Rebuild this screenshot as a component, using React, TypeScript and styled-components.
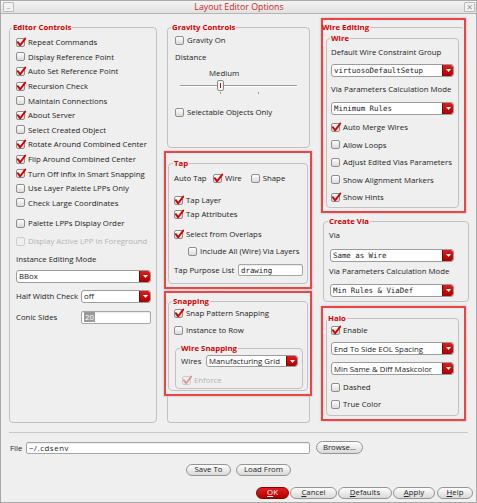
import React from "react";
import styled, { createGlobalStyle, css } from "styled-components";

const SANS = `"Open Sans", "DejaVu Sans", sans-serif`;
const MONO = `"DejaVu Sans Mono", "Liberation Mono", monospace`;

const GlobalStyle = createGlobalStyle`
  html, body { margin: 0; padding: 0; background: #efefef; }
  * { box-sizing: border-box; }
`;

const Window = styled.div`
  width: 477px;
  height: 503px;
  border: 1px solid #a9a9a9;
  background: #efefef;
  display: flex;
  flex-direction: column;
  font-family: ${SANS};
  font-size: 7.8px;
  color: #222;
  overflow: hidden;
`;

const TitleBar = styled.div`
  height: 13px;
  flex: none;
  display: flex;
  align-items: center;
  justify-content: space-between;
  padding: 0 1px 0 2px;
  background: linear-gradient(#f4f4f4, #e1e1e1);
  border-bottom: 1px solid #b4b4b4;
`;

const TitleButton = styled.span`
  width: 11px;
  height: 10px;
  border: 1px solid #b9b9b9;
  border-radius: 1px;
  background: #f3f3f3;
  display: flex;
  align-items: center;
  justify-content: center;
  color: #9a9a9a;
  font-size: 8px;
  line-height: 1;
`;

const Title = styled.span`
  color: #d01c1c;
  font-size: 8.8px;
  line-height: 12px;
`;

const Body = styled.div`
  flex: none;
  height: 409px;
  display: flex;
  padding: 4px 7px 0 8px;
`;

const Column = styled.div<{ $ml?: number }>`
  width: 148px;
  flex: none;
  display: flex;
  flex-direction: column;
  margin-left: ${(p) => p.$ml ?? 0}px;
`;

const Group = styled.fieldset<{ $m?: string; $h?: number; $grow?: boolean; $topOnly?: boolean; $open?: boolean }>`
  margin: ${(p) => p.$m ?? "0"};
  padding: 0;
  min-width: 0;
  border: 1px solid #c2c2c2;
  border-radius: 4px;
  ${(p) => (p.$h ? `height: ${p.$h}px; flex: none;` : "")}
  ${(p) => (p.$grow ? "flex: 1;" : "")}
  ${(p) =>
    p.$topOnly &&
    css`
      border-left-color: transparent;
      border-right-color: transparent;
      border-bottom-color: transparent;
    `}
  ${(p) =>
    p.$open &&
    css`
      border-top: none;
      border-top-left-radius: 0;
      border-top-right-radius: 0;
    `}
`;

const Legend = styled.legend<{ $ml?: number }>`
  color: #d40000;
  font-weight: 700;
  font-size: 7.8px;
  line-height: 10px;
  padding: 0 1px;
  margin-left: ${(p) => p.$ml ?? 3}px;
`;

const Content = styled.div<{ $p: string }>`
  display: flex;
  flex-direction: column;
  padding: ${(p) => p.$p};
`;

const RedBox = styled.div<{ $m?: string; $h: number; $p: string }>`
  flex: none;
  height: ${(p) => p.$h}px;
  margin: ${(p) => p.$m ?? "0"};
  padding: ${(p) => p.$p};
  border: 2px solid #f04444;
  box-shadow: 0 0 2px rgba(0, 0, 0, 0.25);
  display: flex;
  flex-direction: column;
`;

const Row = styled.div<{ $h?: number; $mt?: number; $pl?: number; $between?: boolean }>`
  display: flex;
  align-items: center;
  flex: none;
  height: ${(p) => p.$h ?? 14}px;
  margin-top: ${(p) => p.$mt ?? 0}px;
  padding-left: ${(p) => p.$pl ?? 0}px;
  white-space: nowrap;
  ${(p) => p.$between && "justify-content: space-between;"}
`;

const Label = styled.span<{ $w?: number; $disabled?: boolean }>`
  ${(p) => (p.$w ? `width: ${p.$w}px; flex: none;` : "")}
  color: ${(p) => (p.$disabled ? "#b3b3b3" : "#222")};
`;

const CheckLabel = styled.span<{ $disabled?: boolean; $ml?: number }>`
  display: inline-flex;
  align-items: center;
  gap: 3px;
  margin-left: ${(p) => p.$ml ?? 0}px;
  color: ${(p) => (p.$disabled ? "#b3b3b3" : "#222")};
`;

const Box = styled.span<{ $disabled?: boolean }>`
  position: relative;
  width: 9px;
  height: 9px;
  flex: none;
  border: 1px solid ${(p) => (p.$disabled ? "#cdcdcd" : "#8e8e8e")};
  border-radius: 2px;
  background: ${(p) => (p.$disabled ? "#efefef" : "linear-gradient(#fefefe, #dadada)")};
`;

const Mark = styled.svg`
  position: absolute;
  left: -1px;
  top: -2px;
  overflow: visible;
`;

const Check: React.FC<{ on?: boolean; disabled?: boolean; ml?: number; children: React.ReactNode }> = ({
  on,
  disabled,
  ml,
  children,
}) => (
  <CheckLabel $disabled={disabled} $ml={ml}>
    <Box $disabled={disabled}>
      {on && (
        <Mark width="10" height="10" viewBox="0 0 10 10">
          <path
            d="M1.8 5.2 L4.2 8.3 L9.2 1.6"
            fill="none"
            stroke={disabled ? "#dc9a9a" : "#d40000"}
            strokeWidth="1.9"
            strokeLinecap="round"
            strokeLinejoin="round"
          />
        </Mark>
      )}
    </Box>
    {children}
  </CheckLabel>
);

const SelectBox = styled.div<{ $w?: number; $h?: number; $mt?: number; $ml?: number }>`
  flex: none;
  display: flex;
  align-items: stretch;
  width: ${(p) => (p.$w ? `${p.$w}px` : "auto")};
  height: ${(p) => p.$h ?? 13}px;
  margin-top: ${(p) => p.$mt ?? 0}px;
  margin-left: ${(p) => p.$ml ?? 0}px;
  border: 1px solid #9c9c9c;
  border-radius: 3px;
  background: #fff;
  overflow: hidden;
`;

const SelectText = styled.span<{ $mono?: boolean }>`
  flex: 1;
  display: flex;
  align-items: center;
  padding-left: 2px;
  overflow: hidden;
  white-space: nowrap;
  font-family: ${(p) => (p.$mono ? MONO : SANS)};
  font-size: ${(p) => (p.$mono ? "7.4px" : "7.8px")};
  color: #1a1a1a;
`;

const SelectButton = styled.span`
  width: 11px;
  flex: none;
  display: flex;
  align-items: center;
  justify-content: center;
  background: linear-gradient(#dc1e1e, #a80000);
  border-left: 1px solid #8c0000;
  border-radius: 0 2px 2px 0;
`;

const Select: React.FC<{ text: string; mono?: boolean; w?: number; h?: number; mt?: number; ml?: number }> = ({
  text,
  mono,
  w,
  h,
  mt,
  ml,
}) => (
  <SelectBox $w={w} $h={h} $mt={mt} $ml={ml}>
    <SelectText $mono={mono}>{text}</SelectText>
    <SelectButton>
      <svg width="5" height="3" viewBox="0 0 5 3">
        <path d="M0 0 H5 L2.5 3 Z" fill="#fff" />
      </svg>
    </SelectButton>
  </SelectBox>
);

const TextInput = styled.div<{ $w: number; $h?: number; $mono?: boolean; $spaced?: boolean }>`
  flex: none;
  width: ${(p) => p.$w}px;
  height: ${(p) => p.$h ?? 12}px;
  border: 1px solid #a6a6a6;
  border-radius: 2px;
  background: #fff;
  box-shadow: inset 0 1px 1px rgba(0, 0, 0, 0.08);
  display: flex;
  align-items: center;
  padding-left: 2px;
  font-family: ${(p) => (p.$mono ? MONO : SANS)};
  font-size: ${(p) => (p.$mono ? "7.4px" : "7.8px")};
  letter-spacing: ${(p) => (p.$spaced ? "0.6px" : "0")};
  color: #1a1a1a;
  white-space: nowrap;
`;

const Selected = styled.span`
  background: #9a9a9a;
  color: #fff;
  padding: 0 1px;
`;

const SliderLabel = styled.div`
  height: 12px;
  display: flex;
  align-items: center;
  padding-left: 34px;
  margin-top: 3px;
`;

const SliderArt = styled.svg`
  display: block;
  flex: none;
`;

const Separator = styled.div`
  flex: none;
  height: 1px;
  margin: 9px 8px 0 8px;
  background: #c9c9c9;
`;

const FileRow = styled.div`
  flex: none;
  height: 13px;
  margin-top: 8px;
  display: flex;
  align-items: center;
  padding-left: 9px;
`;

const CenterRow = styled.div`
  flex: none;
  height: 12px;
  margin-top: 10px;
  display: flex;
  justify-content: center;
  gap: 5px;
`;

const ButtonRow = styled.div`
  flex: none;
  height: 12px;
  margin-top: 11px;
  display: flex;
  justify-content: flex-end;
  gap: 1px;
  padding-right: 3px;
`;

const Pill = styled.button<{ $w: number; $h?: number; $primary?: boolean; $ml?: number }>`
  width: ${(p) => p.$w}px;
  height: ${(p) => p.$h ?? 12}px;
  margin-left: ${(p) => p.$ml ?? 0}px;
  padding: 0;
  border: 1px solid ${(p) => (p.$primary ? "#8a0000" : "#959595")};
  border-radius: 7px;
  background: ${(p) => (p.$primary ? "linear-gradient(#e41c1c, #b00000)" : "linear-gradient(#fdfdfd, #d9d9d9)")};
  color: ${(p) => (p.$primary ? "#fff" : "#222")};
  font-family: ${SANS};
  font-size: 7.8px;
  line-height: 1;
  display: flex;
  align-items: center;
  justify-content: center;
  white-space: nowrap;
`;

const U = styled.span`
  text-decoration: underline;
`;

export default function App() {
  return (
    <>
      <GlobalStyle />
      <Window>
        <TitleBar>
          <TitleButton>–</TitleButton>
          <Title>Layout Editor Options</Title>
          <TitleButton>✕</TitleButton>
        </TitleBar>

        <Body>
          {/* Left column */}
          <Column>
            <Group $m="4px 0 0 0" $h={401}>
              <Legend $ml={2}>Editor Controls</Legend>
              <Content $p="3px 5px 0 6px">
                <Row $h={14.6}><Check on>Repeat Commands</Check></Row>
                <Row $h={14.6}><Check>Display Reference Point</Check></Row>
                <Row $h={14.6}><Check on>Auto Set Reference Point</Check></Row>
                <Row $h={14.6}><Check on>Recursion Check</Check></Row>
                <Row $h={14.6}><Check>Maintain Connections</Check></Row>
                <Row $h={14.6}><Check on>About Server</Check></Row>
                <Row $h={14.6}><Check>Select Created Object</Check></Row>
                <Row $h={14.6}><Check on>Rotate Around Combined Center</Check></Row>
                <Row $h={14.6}><Check on>Flip Around Combined Center</Check></Row>
                <Row $h={14.6}><Check on>Turn Off Infix In Smart Snapping</Check></Row>
                <Row $h={14.6}><Check>Use Layer Palette LPPs Only</Check></Row>
                <Row $h={14.6}><Check>Check Large Coordinates</Check></Row>
                <Row $h={14.6} $mt={6}><Check>Palette LPPs Display Order</Check></Row>
                <Row $h={14.6} $mt={3}><Check disabled>Display Active LPP In Foreground</Check></Row>
                <Row $h={14.6} $mt={3}><Label>Instance Editing Mode</Label></Row>
                <Select text="BBox" mt={4} />
                <Row $h={13} $mt={7}>
                  <Label $w={65}>Half Width Check</Label>
                  <Select text="off" w={70} />
                </Row>
                <Row $h={13} $mt={8}>
                  <Label $w={65}>Conic Sides</Label>
                  <TextInput $w={70} $h={13}><Selected>20</Selected></TextInput>
                </Row>
              </Content>
            </Group>
          </Column>

          {/* Middle column */}
          <Column $ml={7}>
            <Group $m="4px 2px 0 3px" $h={126}>
              <Legend $ml={3}>Gravity Controls</Legend>
              <Content $p="1px 4px 0 7px">
                <Row $h={14}><Check>Gravity On</Check></Row>
                <Row $h={14} $mt={3}><Label>Distance</Label></Row>
                <SliderLabel>Medium</SliderLabel>
                <SliderArt width="130" height="17" viewBox="0 0 130 17">
                  <line x1="5" y1="6.5" x2="122" y2="6.5" stroke="#9a9a9a" strokeWidth="1" />
                  <line x1="5" y1="7.5" x2="122" y2="7.5" stroke="#ffffff" strokeWidth="1" />
                  <line x1="45.5" y1="13" x2="45.5" y2="15" stroke="#9a9a9a" strokeWidth="1" />
                  <line x1="83.5" y1="13" x2="83.5" y2="15" stroke="#9a9a9a" strokeWidth="1" />
                  <rect x="42.5" y="1.5" width="6" height="10" rx="1.5" fill="#f7f7f7" stroke="#8a8a8a" />
                  <line x1="45.5" y1="4" x2="45.5" y2="9" stroke="#d40000" strokeWidth="1" />
                </SliderArt>
                <Row $h={14} $mt={9}><Check>Selectable Objects Only</Check></Row>
              </Content>
            </Group>

            <RedBox $m="3px 0 0 0" $h={138} $p="5px 2px 3px 2px">
              <Group $grow>
                <Legend $ml={4}>Tap</Legend>
                <Content $p="3px 4px 0 5px">
                  <Row $h={14}>
                    <Label $w={39}>Auto Tap</Label>
                    <Check on>Wire</Check>
                    <Check ml={9}>Shape</Check>
                  </Row>
                  <Row $h={14} $mt={8}><Check on>Tap Layer</Check></Row>
                  <Row $h={14}><Check on>Tap Attributes</Check></Row>
                  <Row $h={14} $mt={6}><Check on>Select from Overlaps</Check></Row>
                  <Row $h={14} $mt={3} $pl={14}><Check>Include All (Wire) Via Layers</Check></Row>
                  <Row $h={12} $mt={6} $between>
                    <Label>Tap Purpose List</Label>
                    <TextInput $w={65} $mono>drawing</TextInput>
                  </Row>
                </Content>
              </Group>
            </RedBox>

            <RedBox $m="2px 0 0 0" $h={105} $p="3px 2px 3px 2px">
              <Group $grow>
                <Legend $ml={3}>Snapping</Legend>
                <Content $p="0 4px 0 5px">
                  <Row $h={14}><Check on>Snap Pattern Snapping</Check></Row>
                  <Row $h={14} $mt={3}><Check>Instance to Row</Check></Row>
                  <Group $m="6px 0 0 1px">
                    <Legend $ml={4}>Wire Snapping</Legend>
                    <Content $p="2px 4px 1px 5px">
                      <Row $h={12}>
                        <Label $w={25}>Wires</Label>
                        <Select text="Manufacturing Grid" w={92} h={12} />
                      </Row>
                      <Row $h={14} $mt={6} $pl={1}><Check on disabled>Enforce</Check></Row>
                    </Content>
                  </Group>
                </Content>
              </Group>
            </RedBox>

            <Group $m="0 2px 0 3px" $grow $open />
          </Column>

          {/* Right column */}
          <Column $ml={9}>
            <RedBox $m="0 3px 0 0" $h={195} $p="2px 0 0 0">
              <Group $topOnly $grow>
                <Legend $ml={-3}>Wire Editing</Legend>
                <Content $p="1px 4px 0 2px">
                  <Group>
                    <Legend $ml={3}>Wire</Legend>
                    <Content $p="3px 4px 1px 4px">
                      <Row $h={12}><Label>Default Wire Constraint Group</Label></Row>
                      <Select text="virtuosoDefaultSetup" mono mt={6} />
                      <Row $h={12} $mt={6}><Label>Via Parameters Calculation Mode</Label></Row>
                      <Select text="Minimum Rules" mono mt={7} />
                      <Row $h={17.5} $mt={3.25}><Check on>Auto Merge Wires</Check></Row>
                      <Row $h={17.5}><Check>Allow Loops</Check></Row>
                      <Row $h={17.5}><Check>Adjust Edited Vias Parameters</Check></Row>
                      <Row $h={17.5}><Check>Show Alignment Markers</Check></Row>
                      <Row $h={17.5}><Check on>Show Hints</Check></Row>
                    </Content>
                  </Group>
                </Content>
              </Group>
            </RedBox>

            <Group $m="3px 0 0 2px" $h={86}>
              <Legend $ml={4}>Create Via</Legend>
              <Content $p="3px 4px 0 5px">
                <Row $h={12}><Label>Via</Label></Row>
                <Select text="Same as Wire" mono mt={8} w={124} ml={1} />
                <Row $h={12} $mt={3}><Label>Via Parameters Calculation Mode</Label></Row>
                <Select text="Min Rules & ViaDef" mono mt={7} w={124} ml={1} />
              </Content>
            </Group>

            <RedBox $m="4px 3px 0 0" $h={115} $p="5px 5px 3px 3px">
              <Group $grow>
                <Legend $ml={0}>Halo</Legend>
                <Content $p="0 4px 0 4px">
                  <Row $h={14}><Check on>Enable</Check></Row>
                  <Select text="End To Side EOL Spacing" mt={5} />
                  <Select text="Min Same & Diff Maskcolor" mt={7} />
                  <Row $h={14} $mt={5}><Check>Dashed</Check></Row>
                  <Row $h={14} $mt={3}><Check>True Color</Check></Row>
                </Content>
              </Group>
            </RedBox>
          </Column>
        </Body>

        <Separator />

        <FileRow>
          <Label $w={16}>File</Label>
          <TextInput $w={284} $spaced>~/.cdsenv</TextInput>
          <Pill $w={47} $h={13} $ml={6}>Browse...</Pill>
        </FileRow>

        <CenterRow>
          <Pill $w={45}>Save To</Pill>
          <Pill $w={55}>Load From</Pill>
        </CenterRow>

        <ButtonRow>
          <Pill $w={33} $primary><U>O</U>K</Pill>
          <Pill $w={47}><U>C</U>ancel</Pill>
          <Pill $w={54}><U>D</U>efaults</Pill>
          <Pill $w={42}><U>A</U>pply</Pill>
          <Pill $w={36} $ml={1}><U>H</U>elp</Pill>
        </ButtonRow>
      </Window>
    </>
  );
}
